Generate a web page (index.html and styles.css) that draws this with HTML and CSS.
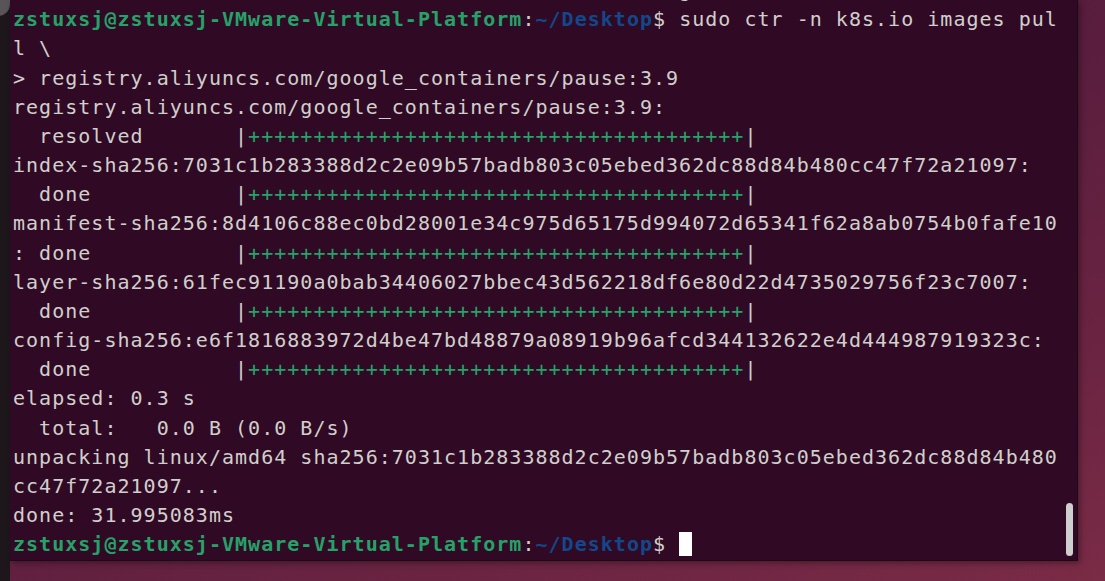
FILE: index.html
```html
<!DOCTYPE html>
<html>
<head>
<meta charset="utf-8">
<link rel="stylesheet" href="styles.css">
</head>
<body>
<div class="screen">
  <div class="side"><div class="side-knob"></div></div>
  <div class="term">
<pre class="out"><span class="ghost">      ,              ,                ,   /        g</span>
<span class="g">zstuxsj@zstuxsj-VMware-Virtual-Platform</span>:<span class="b">~/Desktop</span>$ sudo ctr -n k8s.io images pul
l \
&gt; registry.aliyuncs.com/google_containers/pause:3.9
registry.aliyuncs.com/google_containers/pause:3.9:
  resolved       |<span class="p">++++++++++++++++++++++++++++++++++++++</span>|
index-sha256:7031c1b283388d2c2e09b57badb803c05ebed362dc88d84b480cc47f72a21097:
  done           |<span class="p">++++++++++++++++++++++++++++++++++++++</span>|
manifest-sha256:8d4106c88ec0bd28001e34c975d65175d994072d65341f62a8ab0754b0fafe10
: done           |<span class="p">++++++++++++++++++++++++++++++++++++++</span>|
layer-sha256:61fec91190a0bab34406027bbec43d562218df6e80d22d4735029756f23c7007:
  done           |<span class="p">++++++++++++++++++++++++++++++++++++++</span>|
config-sha256:e6f1816883972d4be47bd48879a08919b96afcd344132622e4d444987919323c:
  done           |<span class="p">++++++++++++++++++++++++++++++++++++++</span>|
elapsed: 0.3 s
  total:   0.0 B (0.0 B/s)
unpacking linux/amd64 sha256:7031c1b283388d2c2e09b57badb803c05ebed362dc88d84b480
cc47f72a21097...
done: 31.995083ms
<span class="g">zstuxsj@zstuxsj-VMware-Virtual-Platform</span>:<span class="b">~/Desktop</span>$ <span class="cursor"> </span></pre>
    <div class="scrollbar"></div>
  </div>
</div>
</body>
</html>
```
FILE: styles.css
```css
html, body {
  margin: 0;
  padding: 0;
  overflow: hidden;
}

.screen {
  width: 1105px;
  height: 581px;
  display: flex;
  align-items: flex-start;
  background: linear-gradient(160deg, #4a1736 0%, #5a1d3e 45%, #6a2442 75%, #7a2b46 100%);
}

.side {
  width: 10px;
  height: 581px;
  flex: none;
  background: #1d171b;
  position: relative;
}

.side-knob {
  position: absolute;
  left: -8px;
  top: -10px;
  width: 18px;
  height: 26px;
  border-radius: 0 0 12px 0;
  background: #5a5458;
}

.term {
  position: relative;
  width: 1067px;
  height: 560px;
  flex: none;
  background: #300a24;
  border-right: 1px solid #1f0818;
  border-bottom: 1px solid #1f0818;
  overflow: hidden;
  box-shadow: 2px 2px 6px rgba(0, 0, 0, 0.35);
}

.out {
  margin: -23.85px 0 0 0;
  padding: 0 0 0 3px;
  font-family: "DejaVu Sans Mono", monospace;
  font-size: 20px;
  letter-spacing: 1.02px;
  line-height: 29.15px;
  color: #d0cfcc;
  white-space: pre;
}

.g {
  color: #26a269;
  font-weight: bold;
}

.b {
  color: #12488b;
  font-weight: bold;
}

.p {
  color: #26a269;
}

.ghost {
  color: #d0cfcc;
}

.cursor {
  background: #ffffff;
  color: #300a24;
}

.scrollbar {
  position: absolute;
  left: 1056px;
  top: 503px;
  width: 7px;
  height: 53px;
  border-radius: 4px;
  background: #cfcfcf;
}
```
